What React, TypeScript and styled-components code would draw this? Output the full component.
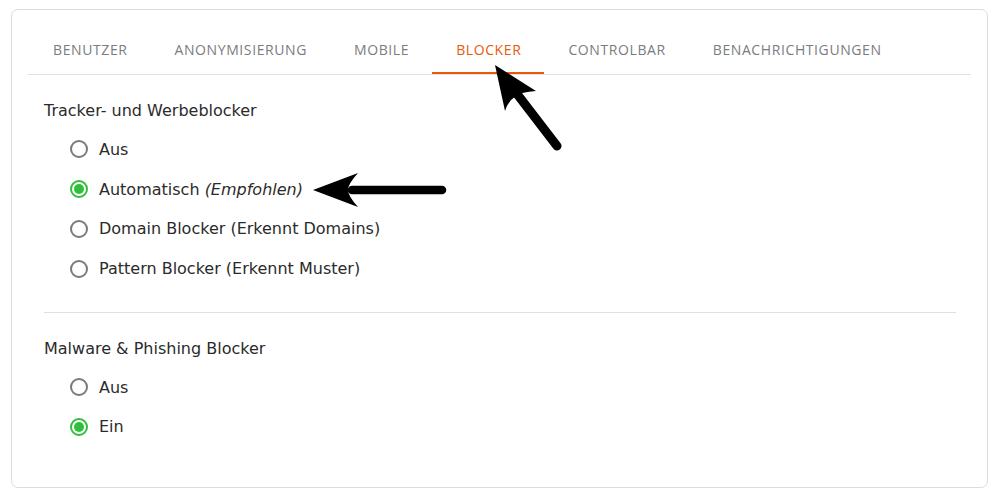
import React, { useState } from "react";
import styled, { createGlobalStyle } from "styled-components";

const GlobalStyle = createGlobalStyle`
  html, body {
    margin: 0;
    padding: 0;
    background: #ffffff;
  }
  body {
    font-family: "DejaVu Sans", Verdana, sans-serif;
    color: #2b2b2b;
  }
`;

const tabs = ["Benutzer", "Anonymisierung", "Mobile", "Blocker", "Controlbar", "Benachrichtigungen"];

interface Option {
  label: string;
  note?: string;
}

const trackerOptions: Option[] = [
  { label: "Aus" },
  { label: "Automatisch", note: "(Empfohlen)" },
  { label: "Domain Blocker (Erkennt Domains)" },
  { label: "Pattern Blocker (Erkennt Muster)" },
];

const malwareOptions: Option[] = [{ label: "Aus" }, { label: "Ein" }];

const App = () => {
  const [activeTab, setActiveTab] = useState(3);
  const [tracker, setTracker] = useState(1);
  const [malware, setMalware] = useState(1);

  return (
    <Page>
      <GlobalStyle />
      <Card>
        <TabBar>
          {tabs.map((t, i) => (
            <Tab key={t} active={i === activeTab} onClick={() => setActiveTab(i)}>
              {t}
            </Tab>
          ))}
        </TabBar>
        <Content>
          <Section>
            <Heading>Tracker- und Werbeblocker</Heading>
            {trackerOptions.map((o, i) => (
              <RadioRow key={o.label} onClick={() => setTracker(i)}>
                <Radio checked={i === tracker} />
                <span>
                  {o.label}
                  {o.note && <> <em>{o.note}</em></>}
                </span>
              </RadioRow>
            ))}
          </Section>
          <Divider />
          <Section>
            <Heading>Malware &amp; Phishing Blocker</Heading>
            {malwareOptions.map((o, i) => (
              <RadioRow key={o.label} onClick={() => setMalware(i)}>
                <Radio checked={i === malware} />
                <span>{o.label}</span>
              </RadioRow>
            ))}
          </Section>
        </Content>
      </Card>
      <Arrows viewBox="0 0 1000 499" width="1000" height="499">
        <line x1="557" y1="146" x2="514" y2="90" stroke="#000" strokeWidth="9" strokeLinecap="round" />
        <path d="M495 65 L536 91 Q521 92 516 96 Q508 101 505 111 Z" fill="#000" />
        <line x1="442" y1="190" x2="352" y2="190" stroke="#000" strokeWidth="8.5" strokeLinecap="round" />
        <path d="M313 190 L358 173 Q348 184 348 190 Q348 196 358 207 Z" fill="#000" />
      </Arrows>
    </Page>
  );
};

const Page = styled.div`
  position: relative;
  width: 1000px;
  height: 499px;
  padding: 9px 12px 0 11px;
  box-sizing: border-box;
`;

const Card = styled.div`
  height: 479px;
  box-sizing: border-box;
  border: 1px solid #dcdcdc;
  border-radius: 7px;
  padding: 16px 16px 0 16px;
`;

const TabBar = styled.div`
  display: flex;
  padding-left: 1px;
  border-bottom: 1px solid #e0e0e0;
`;

const Tab = styled.div<{ active?: boolean }>`
  height: 48px;
  box-sizing: border-box;
  padding: 0 23px 0 24px;
  line-height: 48px;
  font-family: "Open Sans", sans-serif;
  font-size: 14px;
  letter-spacing: 0.6px;
  text-transform: uppercase;
  color: ${({ active }) => (active ? "#e8590c" : "#7a7c80")};
  border-bottom: 2px solid ${({ active }) => (active ? "#e8590c" : "transparent")};
  cursor: pointer;
`;

const Content = styled.div`
  padding: 0 15px 0 16px;
`;

const Section = styled.div`
  padding-top: 26px;
`;

const Heading = styled.div`
  font-size: 16px;
  line-height: 20px;
  margin-bottom: 8.6px;
`;

const RadioRow = styled.label`
  display: flex;
  align-items: center;
  gap: 11px;
  height: 39.7px;
  padding-left: 26px;
  font-size: 16px;
  cursor: pointer;

  em {
    font-style: italic;
  }
`;

const Radio = styled.span<{ checked?: boolean }>`
  width: 18px;
  height: 18px;
  box-sizing: border-box;
  border-radius: 50%;
  border: 2px solid ${({ checked }) => (checked ? "#2fbf3a" : "#7a7a7a")};
  display: flex;
  align-items: center;
  justify-content: center;
  flex-shrink: 0;

  &::after {
    content: "";
    width: 10px;
    height: 10px;
    border-radius: 50%;
    background: ${({ checked }) => (checked ? "#2fbf3a" : "transparent")};
  }
`;

const Divider = styled.div`
  height: 1px;
  background: #e0e0e0;
  margin-top: 23.5px;
`;

const Arrows = styled.svg`
  position: absolute;
  left: 0;
  top: 0;
  pointer-events: none;
`;

export default App;
